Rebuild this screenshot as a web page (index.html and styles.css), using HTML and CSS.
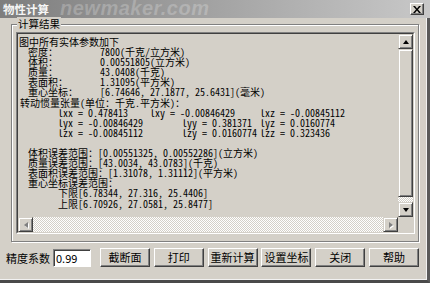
FILE: index.html
```html
<!DOCTYPE html>
<html lang="zh-CN">
<head>
  <meta charset="UTF-8" />
  <title>物性计算</title>
  <link rel="stylesheet" href="styles.css">
</head>
<body>

<div class="window">
  <div class="titlebar">
    <span class="title">物性计算</span>
    <span class="watermark">newmaker.com</span>
    <span class="close-btn">
      <svg width="8" height="7" viewBox="0 0 8 7"><path d="M0 0h2l2 2.5L6 0h2L5 3.5 8 7H6L4 4.5 2 7H0l3-3.5z" fill="#000"/></svg>
    </span>
  </div>

  <div class="client">
    <div class="group">
      <span class="group-title">计算结果</span>
      <div class="edit">
        <div class="edit-inner">
          <div class="text">
            <div class="line">图中所有实体参数加下</div>
            <div class="line prop"><span class="key">密度：</span>7800(千克/立方米)</div>
            <div class="line prop"><span class="key">体积：</span>0.00551805(立方米)</div>
            <div class="line prop"><span class="key">质量：</span>43.0408(千克)</div>
            <div class="line prop"><span class="key">表面积：</span>1.31095(平方米)</div>
            <div class="line prop"><span class="key">重心坐标：</span>[6.74646, 27.1877, 25.6431](毫米)</div>
            <div class="line head">转动惯量张量(单位：千克.平方米)：</div>
            <div class="line tensor"><span class="col-a">lxx = 0.478413</span><span class="col-b">lxy = -0.00846429</span><span>lxz = -0.00845112</span></div>
            <div class="line tensor"><span class="col-c">lyx = -0.00846429</span><span class="col-d">lyy = 0.381371</span><span>lyz = 0.0160774</span></div>
            <div class="line tensor"><span class="col-c">lzx = -0.00845112</span><span class="col-d">lzy = 0.0160774</span><span>lzz = 0.323436</span></div>
            <div class="line"> </div>
            <div class="line prop">体积误差范围：[0.00551325, 0.00552286](立方米)</div>
            <div class="line prop">质量误差范围：[43.0034, 43.0783](千克)</div>
            <div class="line prop">表面积误差范围：[1.31078, 1.31112](平方米)</div>
            <div class="line prop">重心坐标误差范围：</div>
            <div class="line tensor">下限[6.78344, 27.316, 25.4406]</div>
            <div class="line tensor">上限[6.70926, 27.0581, 25.8477]</div>
          </div>

          <div class="vscroll">
            <span class="sb-btn"><i class="arrow up"></i></span>
            <span class="sb-thumb"></span>
            <span class="sb-track"></span>
            <span class="sb-btn"><i class="arrow down"></i></span>
          </div>
          <div class="hscroll">
            <span class="sb-btn"><i class="arrow left"></i></span>
            <span class="sb-track"></span>
            <span class="sb-btn"><i class="arrow right"></i></span>
          </div>
          <div class="corner"></div>
        </div>
      </div>
    </div>

    <div class="controls">
      <label class="prec-label" for="prec">精度系数</label>
      <input class="prec-input" id="prec" type="text" value="0.99">
      <div class="buttons">
        <button class="btn">截断面</button>
        <button class="btn">打印</button>
        <button class="btn">重新计算</button>
        <button class="btn">设置坐标</button>
        <button class="btn">关闭</button>
        <button class="btn">帮助</button>
      </div>
    </div>
  </div>
</div>

</body>
</html>
```

FILE: styles.css
```css
body { margin: 0; background: #d4d0c8; font-family: "Noto Sans CJK SC", sans-serif; }

.window { width: 430px; height: 283px; display: flex; flex-direction: column; overflow: hidden; }

/* title bar (inactive) */
.titlebar {
  position: relative; height: 18px; flex: none; display: flex; align-items: center;
  padding-left: 3px; background: linear-gradient(to right, #7e7e7e, #c8c8c8);
}
.title { color: #f6f6f6; font-size: 11.5px; font-weight: bold; line-height: 14px; }
.watermark {
  position: absolute; left: 60px; top: -3px; font: italic bold 20px "Liberation Sans", sans-serif;
  color: rgba(255,255,255,0.22); letter-spacing: 0.5px;
}
.close-btn {
  margin-left: auto; margin-right: 6px; width: 14px; height: 12px; box-sizing: border-box;
  display: flex; align-items: center; justify-content: center; background: #d4d0c8;
  border: 1px solid; border-color: #fff #404040 #404040 #fff; box-shadow: inset -1px -1px 0 #808080;
}

.client {
  flex: 1; padding: 6px 8px 0 6px;
  border-right: 3px solid #5a5a5a; border-bottom: 3px solid #4a4a4a;
  box-shadow: inset -1px -1px 0 #f2f2f2;
}

/* group box */
.group {
  position: relative; height: 218px; box-sizing: border-box; margin-left: 5px;
  padding: 7px 0 0 4px; border: 1px solid #808080;
  box-shadow: inset 1px 1px 0 #fff, 1px 1px 0 #fff;
}
.group-title {
  position: absolute; top: -8px; left: 5px; padding: 0 1px; background: #d4d0c8;
  font-size: 10.5px; line-height: 14px; color: #000;
}

.edit {
  width: 399px; height: 202px; box-sizing: border-box;
  border: 1px solid; border-color: #808080 #fff #fff #808080;
}
.edit-inner {
  height: 100%; box-sizing: border-box; border: 1px solid; border-color: #404040 #d4d0c8 #d4d0c8 #404040;
  display: grid; grid-template-columns: 1fr 15px; grid-template-rows: 1fr 15px;
}

.text {
  padding: 3px 0 0 1px; overflow: hidden; white-space: nowrap; color: #000;
  font-family: "Noto Sans Mono CJK SC", "Noto Sans CJK SC", monospace;
  font-size: 10px; line-height: 10.1px;
}
.line { height: 10.1px; white-space: pre; }
.prop { padding-left: 9px; }
.key { display: inline-block; width: 72px; }
.head { padding-left: 1px; }
.tensor { padding-left: 39px; }
.col-a, .col-b, .col-c, .col-d { display: inline-block; }
.col-a { width: 92px; }
.col-b { width: 110px; }
.col-c { width: 124px; }
.col-d { width: 78px; }

/* scrollbars */
.vscroll { display: flex; flex-direction: column; }
.hscroll { display: flex; }
.sb-btn {
  flex: none; width: 15px; height: 15px; box-sizing: border-box; background: #d4d0c8;
  display: flex; align-items: center; justify-content: center;
  border: 1px solid; border-color: #d4d0c8 #404040 #404040 #d4d0c8;
  box-shadow: inset 1px 1px 0 #fff, inset -1px -1px 0 #808080;
}
.sb-thumb {
  flex: none; height: 148px; box-sizing: border-box; background: #d4d0c8;
  border: 1px solid; border-color: #d4d0c8 #404040 #404040 #d4d0c8;
  box-shadow: inset 1px 1px 0 #fff, inset -1px -1px 0 #808080;
}
.sb-track {
  flex: 1; background: repeating-conic-gradient(#fff 0 25%, #d4d0c8 0 50%) 0 0 / 2px 2px;
}
.corner { background: #d4d0c8; }

.arrow { display: block; width: 0; height: 0; }
.arrow.up { border-left: 3.5px solid transparent; border-right: 3.5px solid transparent; border-bottom: 4px solid #000; }
.arrow.down { border-left: 3.5px solid transparent; border-right: 3.5px solid transparent; border-top: 4px solid #000; }
.arrow.left { border-top: 3.5px solid transparent; border-bottom: 3.5px solid transparent; border-right: 4px solid #808080; filter: drop-shadow(1px 1px 0 #fff); }
.arrow.right { border-top: 3.5px solid transparent; border-bottom: 3.5px solid transparent; border-left: 4px solid #808080; filter: drop-shadow(1px 1px 0 #fff); }

/* bottom row */
.controls { display: flex; align-items: center; margin-top: 6px; height: 19px; }
.prec-label { font-size: 11px; color: #000; width: 44px; white-space: nowrap; }
.prec-input {
  margin-left: 3px; width: 38px; height: 18px; box-sizing: border-box; padding: 0 2px;
  font: 11px "Noto Sans CJK SC", sans-serif; color: #000; background: #fff; outline: none;
  border: 1px solid; border-color: #808080 #fff #fff #808080; box-shadow: inset 1px 1px 0 #404040;
}
.buttons { display: flex; gap: 3.8px; margin-left: 9px; }
.btn {
  width: 50px; height: 19px; padding: 0; background: #d4d0c8; color: #000;
  font: 11px "Noto Sans CJK SC", sans-serif; line-height: 15px;
  border: 1px solid; border-color: #fff #404040 #404040 #fff; box-shadow: inset -1px -1px 0 #808080;
}
```
